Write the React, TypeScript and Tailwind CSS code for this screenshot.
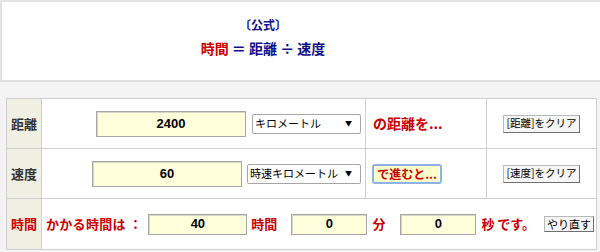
import React from "react";

const jp = "font-['Noto_Sans_CJK_JP','Noto_Sans',sans-serif]";
const num = "font-['Liberation_Sans',Arial,sans-serif]";

const Field = ({value, className}: {value: string; className: string}) => (
    <div
        className={`flex items-center justify-center bg-[#ffffdb] border border-[#a6a6a6] shadow-[inset_1px_1px_0_#d8d8c8] text-[13px] font-bold text-black ${num} ${className}`}>
        {value}
    </div>
);

const Picker = ({label, className}: {label: string; className: string}) => (
    <div
        className={`flex items-center justify-between h-[20px] bg-white border border-[#a6a6a6] rounded-[2px] pl-[2px] pr-[8px] text-[11px] text-black ${className}`}>
        <span>{label}</span>
        <span className="text-[7px] leading-none">▼</span>
    </div>
);

const ClearButton = ({children}: {children: React.ReactNode}) => (
    <button
        className="flex items-center justify-center w-[77px] h-[18px] bg-[#f6f6f6] border border-[#b8b8b8] border-r-[#6f6f6f] border-b-[#6f6f6f] text-[10.5px] text-black leading-none">
        {children}
    </button>
);

const App = () => {
    const label = "flex items-center justify-center bg-[#efefe3] text-[13px] font-bold";

    return (
        <div className={`w-[600px] h-[252px] bg-[#f4f4f4] overflow-hidden ${jp}`}>
            <div className="h-[82px] bg-white border-t-2 border-l-2 border-b-2 border-[#e2e2e2]">
                <div className="w-[522px] flex flex-col items-center pt-[14px]">
                    <p className="text-[12px] font-bold text-[#10108a] leading-[18px]">〔公式〕</p>
                    <p className="mt-[5px] text-[14px] font-bold text-[#10108a] leading-[18px] whitespace-pre">
                        <span className="text-[#cc0000]">時間</span> ＝ 距離 ÷ 速度
                    </p>
                </div>
            </div>

            <div
                className="mt-[16px] ml-[6px] w-[591px] grid grid-cols-[34px_323px_120px_109px] grid-rows-[49px_49px_50px] gap-px p-px bg-[#cfcfcf]">
                {/* distance */}
                <div className={`${label} text-[#333333]`}>距離</div>
                <div className="flex items-center justify-end gap-[6px] pr-[4px] bg-white">
                    <Field value="2400" className="w-[150px] h-[26px]"/>
                    <Picker label="キロメートル" className="w-[109px]"/>
                </div>
                <div className="flex items-center pl-[7px] bg-white text-[14px] font-bold text-[#cc0000]">
                    の距離を...
                </div>
                <div className="flex items-center justify-center bg-white">
                    <ClearButton>[距離]をクリア</ClearButton>
                </div>

                {/* speed */}
                <div className={`${label} text-[#333333]`}>速度</div>
                <div className="flex items-center justify-end gap-[5px] pr-[4px] bg-white">
                    <Field value="60" className="w-[150px] h-[26px]"/>
                    <Picker label="時速キロメートル" className="w-[114px]"/>
                </div>
                <div className="flex items-center pl-[6px] bg-white">
                    <button
                        className="flex items-center justify-center w-[70px] h-[20px] bg-[#ffffcc] border-2 border-[#8fb2e6] rounded-[3px] text-[12px] font-bold text-[#cc0000] leading-none">
                        で進むと...
                    </button>
                </div>
                <div className="flex items-center justify-center bg-white">
                    <ClearButton>[速度]をクリア</ClearButton>
                </div>

                {/* time */}
                <div className={`${label} text-[#cc0000]`}>時間</div>
                <div
                    className="col-span-3 flex items-center pl-[4px] bg-white text-[13px] font-bold text-[#cc0000] whitespace-pre">
                    <span className="tracking-[0.3px]">かかる時間は ：</span>
                    <Field value="40" className="ml-[6px] w-[99px] h-[21px]"/>
                    <span className="ml-[4px]">時間</span>
                    <Field value="0" className="ml-[14px] w-[76px] h-[21px]"/>
                    <span className="ml-[5px]">分</span>
                    <Field value="0" className="ml-[15px] w-[76px] h-[21px]"/>
                    <span className="ml-[5px]">秒 です。</span>
                    <button
                        className="ml-[9px] flex items-center justify-center w-[50px] h-[16px] bg-[#f6f6f6] border border-[#b8b8b8] border-r-[#6f6f6f] border-b-[#6f6f6f] text-[11px] font-normal text-black leading-none">
                        やり直す
                    </button>
                </div>
            </div>
        </div>
    );
};

export default App;
